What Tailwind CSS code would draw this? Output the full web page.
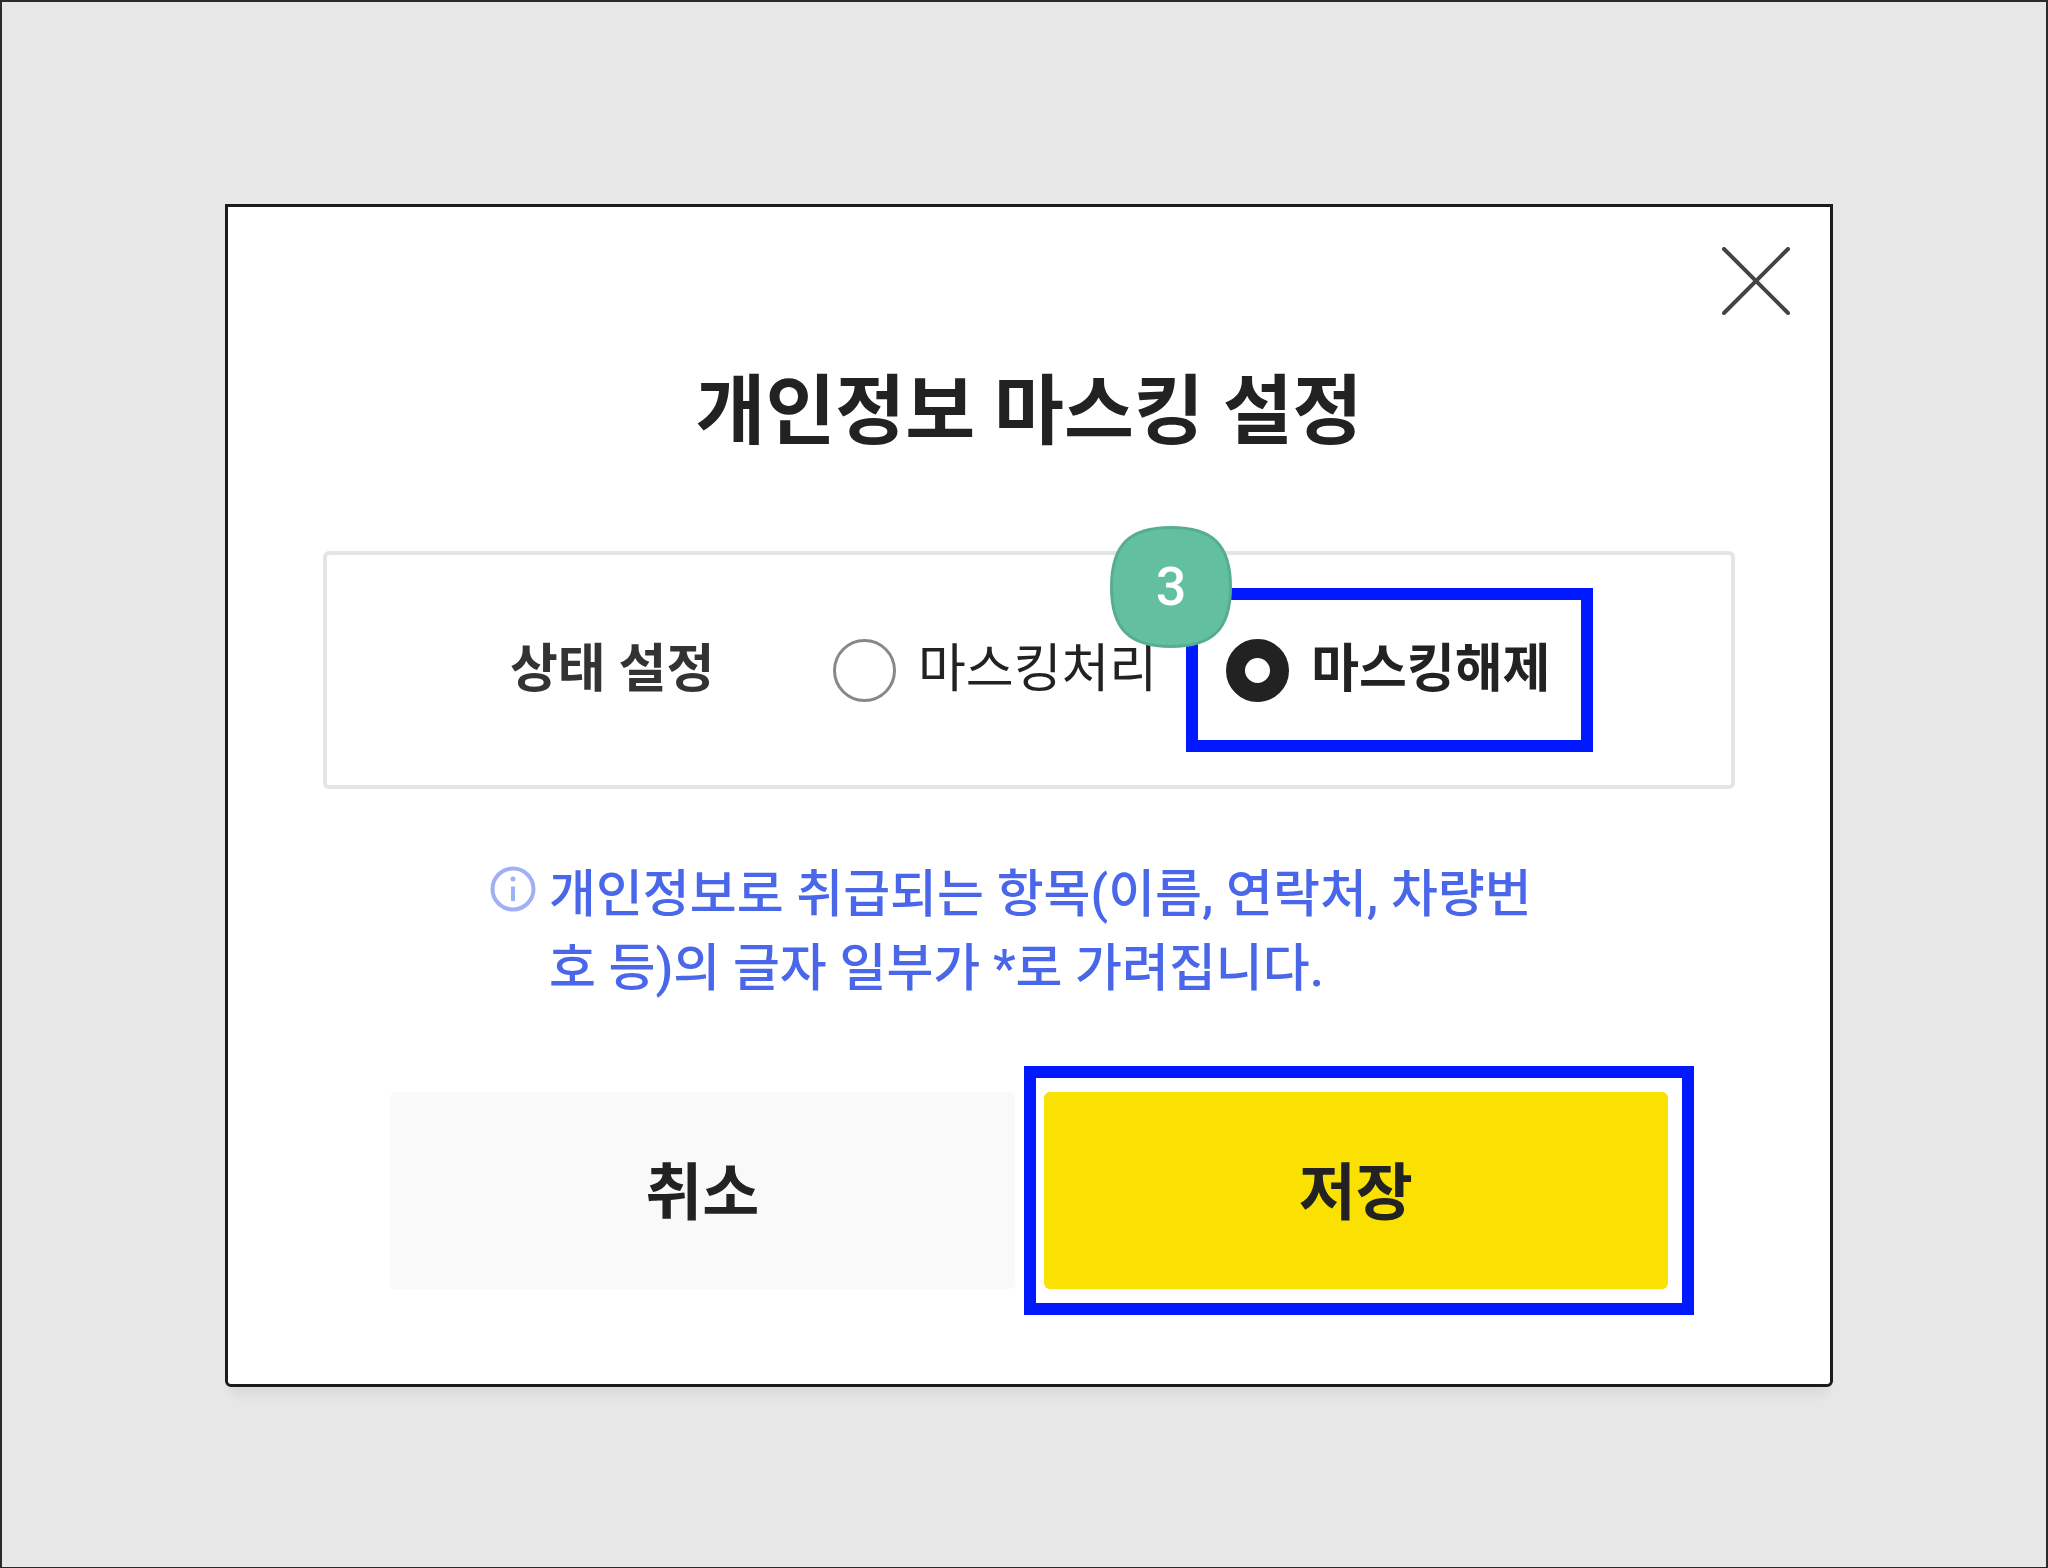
<!DOCTYPE html>
<html lang="ko">
<head>
  <meta charset="UTF-8" />
  <meta name="viewport" content="width=device-width, initial-scale=1.0" />
  <title>개인정보 마스킹 설정</title>
  <script src="https://cdn.jsdelivr.net/npm/@tailwindcss/browser@4"></script>
</head>
<body class="min-h-screen border-2 border-[#2b2a2b] bg-[#e7e7e7] pt-[202px] pr-[213px] pb-[180px] pl-[223px] font-['Roboto','Noto_Sans_CJK_KR',sans-serif] text-[52px] text-[#222]">

  <!-- Dialog -->
  <div role="dialog" aria-labelledby="title" class="flex flex-col rounded-b-md border-3 border-[#1c1c1c] bg-white pb-[95px] shadow-[0_14px_10px_-6px_rgba(0,0,0,0.06)]">
    <button type="button" aria-label="닫기" class="mt-10 mr-10 cursor-pointer self-end">
      <svg class="block size-[68px]" viewBox="0 0 68 68" fill="none" stroke="#444" stroke-width="4" stroke-linecap="round">
        <path d="M2 2 66 66M66 2 2 66" />
      </svg>
    </button>

    <h1 id="title" class="mt-[49px] text-center text-[76px] leading-24 font-bold">개인정보 마스킹 설정</h1>

    <!-- Status -->
    <fieldset class="mx-[95px] mt-[91px] rounded-md border-4 border-[#e5e5e5] py-[82px] pl-[183px]">
      <div class="flex items-center leading-[66px] whitespace-nowrap">
        <span class="w-[323px] font-bold text-[#333]">상태 설정</span>
        <label class="flex cursor-pointer items-center gap-[22px]">
          <input type="radio" name="mask" value="on" class="size-[63px] appearance-none rounded-full border-3 border-[#888] bg-white checked:border-[19px] checked:border-[#222]" />
          <span>마스킹처리</span>
        </label>
        <label class="relative ml-[69px] flex cursor-pointer items-center gap-[22px]">
          <input type="radio" name="mask" value="off" checked class="size-[63px] appearance-none rounded-full border-3 border-[#888] bg-white checked:border-[19px] checked:border-[#222]" />
          <span class="font-bold">마스킹해제</span>
          <!-- Step marker -->
          <span class="pointer-events-none absolute -inset-y-[49px] -right-[43px] -left-10 border-12 border-[#0019ff]"></span>
          <span class="pointer-events-none absolute -top-[111px] -left-[116px] flex size-[122px] items-center justify-center text-[54px] font-medium text-white">
            <svg class="absolute inset-0 size-full" viewBox="0 0 122 122" fill="#62bfa0" stroke="#56ad90" stroke-width="3">
              <path d="M61 1.500C103 1.500 120.500 19 120.500 61S103 120.500 61 120.500 1.500 103 1.500 61 19 1.500 61 1.500Z" />
            </svg>
            <span class="relative">3</span>
          </span>
        </label>
      </div>
    </fieldset>

    <!-- Notice -->
    <div class="mt-16 flex gap-[13px] pl-[262px] text-[51px] font-medium text-[#4a67ea]">
      <svg class="mt-[13px] size-[46px] shrink-0" viewBox="0 0 46 46" fill="none" stroke="#9fb0f7" stroke-width="4">
        <circle cx="23" cy="23" r="20.500" />
        <path d="M23 20.500V35" />
        <circle cx="23" cy="13" r="2.500" fill="#9fb0f7" stroke="none" />
      </svg>
      <p class="max-w-[1010px] pt-[5px] leading-[74px]">개인정보로 취급되는 항목(이름, 연락처, 차량번호 등)의 글자 일부가 *로 가려집니다.</p>
    </div>

    <!-- Buttons -->
    <div class="mt-[86px] grid grid-cols-2 gap-[29px] px-[162px] text-[62px] font-bold">
      <button type="button" class="h-[197px] cursor-pointer rounded-md bg-[#f9f9f9] pt-1.5">취소</button>
      <div class="relative flex">
        <button type="button" class="h-[197px] grow cursor-pointer rounded-md bg-[#fbe102] pt-1.5">저장</button>
        <span class="pointer-events-none absolute -inset-y-[26px] -right-[26px] -left-5 border-12 border-[#0019ff]"></span>
      </div>
    </div>
  </div>

</body>
</html>
